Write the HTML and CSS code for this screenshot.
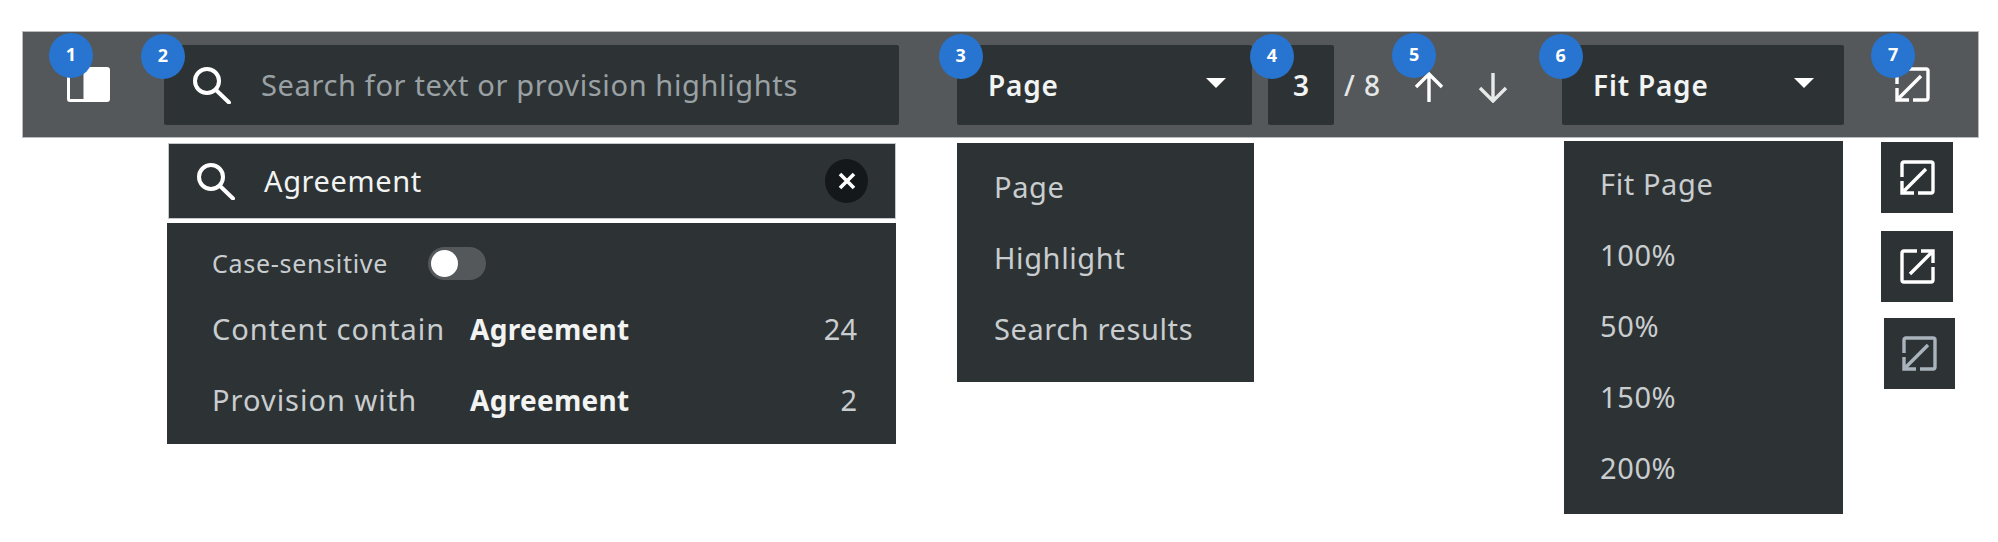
FILE: index.html
```html
<!DOCTYPE html>
<html lang="en">
<head>
  <meta charset="UTF-8">
  <meta name="viewport" content="width=device-width, initial-scale=1.0">
  <title>Document Viewer Toolbar</title>
  <link rel="stylesheet" href="styles.css">
</head>
<body>
  <!-- Toolbar -->
  <div class="toolbar">
    <div class="tool tool-panel">
      <span class="badge">1</span>
      <svg class="icon-panel" viewBox="0 0 43 35"><path d="M3 1.5H18V33.5H3Q1.5 33.5 1.5 32V3Q1.5 1.5 3 1.5Z" fill="none" stroke="#fff" stroke-width="3"/><path d="M18 0H40Q43 0 43 3V32Q43 35 40 35H18Z" fill="#fff"/></svg>
    </div>
    <div class="tool tool-search">
      <span class="badge">2</span>
      <svg class="icon-search" viewBox="0 0 39 38"><circle cx="15" cy="15" r="12" fill="none" stroke="#fff" stroke-width="4"/><path d="M24 24L37 36.5" fill="none" stroke="#fff" stroke-width="4" stroke-linecap="round"/></svg>
      <span class="placeholder">Search for text or provision highlights</span>
    </div>
    <div class="tool tool-select select-mode">
      <span class="badge badge-narrow">3</span>
      <span class="select-label">Page</span>
      <span class="caret"></span>
    </div>
    <div class="tool tool-page">
      <span class="badge badge-narrow">4</span>
      <span>3</span>
    </div>
    <span class="page-total">/ 8</span>
    <div class="tool tool-arrows">
      <span class="badge badge-narrow">5</span>
      <svg class="icon-arrow" viewBox="0 0 32 31"><path d="M16 30V2M3 15L16 2L29 15" fill="none" stroke="#fff" stroke-width="3.4"/></svg>
      <svg class="icon-arrow" viewBox="0 0 32 31"><path d="M16 1V29M3 16L16 29L29 16" fill="none" stroke="#e8eaea" stroke-width="3.4"/></svg>
    </div>
    <div class="tool tool-select select-zoom">
      <span class="badge">6</span>
      <span class="select-label">Fit Page</span>
      <span class="caret"></span>
    </div>
    <div class="tool tool-expand">
      <span class="badge">7</span>
      <svg class="icon-expand" viewBox="0 0 35 35"><path d="M2 17V4Q2 2 4 2H31Q33 2 33 4V31Q33 33 31 33H18M26 9L4 31M2 21V33H14" fill="none" stroke="#fff" stroke-width="3.4"/></svg>
    </div>
  </div>

  <!-- Expanded states -->
  <div class="states">
    <div class="search-states">
      <div class="search-active">
        <svg class="icon-search" viewBox="0 0 39 38"><circle cx="15" cy="15" r="12" fill="none" stroke="#fff" stroke-width="4"/><path d="M24 24L37 36.5" fill="none" stroke="#fff" stroke-width="4" stroke-linecap="round"/></svg>
        <span class="search-value">Agreement</span>
        <span class="clear">
          <svg viewBox="0 0 20 20"><path d="M3 3L17 17M17 3L3 17" fill="none" stroke="#fff" stroke-width="3.6"/></svg>
        </span>
      </div>
      <div class="search-results">
        <div class="case-row">
          <span>Case-sensitive</span>
          <span class="toggle"><span class="knob"></span></span>
        </div>
        <div class="result-row">
          <span class="result-label">Content contain</span>
          <strong>Agreement</strong>
          <span class="result-count">24</span>
        </div>
        <div class="result-row">
          <span class="result-label">Provision with</span>
          <strong>Agreement</strong>
          <span class="result-count">2</span>
        </div>
      </div>
    </div>

    <ul class="menu menu-mode">
      <li>Page</li>
      <li>Highlight</li>
      <li>Search results</li>
    </ul>

    <ul class="menu menu-zoom">
      <li>Fit Page</li>
      <li>100%</li>
      <li>50%</li>
      <li>150%</li>
      <li>200%</li>
    </ul>

    <div class="expand-states">
      <div class="expand-btn">
        <svg class="icon-expand" viewBox="0 0 35 35"><path d="M2 17V4Q2 2 4 2H31Q33 2 33 4V31Q33 33 31 33H18M26 9L4 31M2 21V33H14" fill="none" stroke="#fff" stroke-width="3.4"/></svg>
      </div>
      <div class="expand-btn">
        <svg class="icon-expand" viewBox="0 0 35 35"><path d="M17 2H4Q2 2 2 4V31Q2 33 4 33H31Q33 33 33 31V18M10 25L31 4M21 2H33V14" fill="none" stroke="#fff" stroke-width="3.4"/></svg>
      </div>
      <div class="expand-btn expand-disabled">
        <svg class="icon-expand" viewBox="0 0 35 35"><path d="M2 17V4Q2 2 4 2H31Q33 2 33 4V31Q33 33 31 33H18M26 9L4 31M2 21V33H14" fill="none" stroke="#a9b3bc" stroke-width="3.4"/></svg>
      </div>
    </div>
  </div>
</body>
</html>
```

FILE: styles.css
```css
/* General Styles */
* {
  margin: 0;
  padding: 0;
  box-sizing: border-box;
}

body {
  font-family: "Noto Sans", sans-serif;
  background-color: #fff;
  color: #c9cdcf;
  width: 1998px;
  height: 542px;
  overflow: hidden;
  padding: 31px 0 0 22px;
}

/* Toolbar */
.toolbar {
  display: flex;
  align-items: center;
  width: 1957px;
  height: 107px;
  background-color: #54585b;
  border: 1px solid #b9bcbe;
}

.tool {
  position: relative;
  display: flex;
  align-items: center;
}

.badge {
  position: absolute;
  top: -11px;
  left: -23px;
  width: 44px;
  height: 45px;
  border-radius: 50%;
  background-color: #2775d0;
  color: #fff;
  font-size: 18px;
  font-weight: 700;
  line-height: 43px;
  text-align: center;
  z-index: 1;
}

.badge-narrow {
  left: -18px;
}

.tool-panel {
  margin-left: 44px;
}

.tool-panel .badge {
  top: -34px;
  left: -18px;
}

.icon-panel {
  display: block;
  width: 43px;
  height: 35px;
}

.tool-search {
  width: 735px;
  height: 80px;
  margin-left: 54px;
  padding-left: 28px;
  background-color: #2d3335;
  border-radius: 2px;
}

.icon-search {
  display: block;
  flex: none;
  width: 39px;
  height: 38px;
}

.placeholder {
  margin-left: 30px;
  font-size: 29px;
  letter-spacing: 0.64px;
  color: #9aa1a4;
}

.tool-select {
  justify-content: space-between;
  height: 80px;
  background-color: #2d3335;
  border-radius: 2px;
  font-size: 28px;
  font-weight: 600;
  letter-spacing: 0.8px;
  color: #f2f3f3;
}

.select-mode {
  width: 295px;
  margin-left: 58px;
  padding: 0 26px 0 31px;
}

.select-zoom {
  width: 282px;
  margin-left: 53px;
  padding: 0 30px 0 31px;
}

.caret {
  width: 0;
  height: 0;
  border-left: 10px solid transparent;
  border-right: 10px solid transparent;
  border-top: 10px solid #fff;
  margin-top: -4px;
}

.tool-page {
  justify-content: center;
  width: 66px;
  height: 80px;
  margin-left: 16px;
  background-color: #2d3335;
  border-radius: 2px;
  font-size: 28px;
  font-weight: 600;
  color: #f2f3f3;
}

.page-total {
  margin-left: 10px;
  font-size: 28px;
  font-weight: 500;
  letter-spacing: 1px;
  color: #e6e8e8;
}

.tool-arrows {
  display: flex;
  gap: 32px;
  margin-left: 32px;
  margin-top: 5px;
}

.tool-arrows .badge {
  top: -39px;
  left: -21px;
}

.icon-arrow {
  display: block;
  width: 32px;
  height: 31px;
}

.tool-expand {
  margin-left: 51px;
}

.tool-expand .badge {
  top: -34px;
  left: -24px;
}

.icon-expand {
  display: block;
  width: 35px;
  height: 35px;
}

/* Expanded states */
.states {
  display: flex;
  align-items: flex-start;
}

.search-states {
  width: 729px;
  margin: 5px 0 0 145px;
}

.search-active {
  display: flex;
  align-items: center;
  height: 76px;
  margin-left: 1px;
  padding: 0 27px 0 27px;
  background-color: #2d3335;
  border: 1px solid #c4c8ca;
}

.search-value {
  flex: 1;
  margin-left: 29px;
  padding-bottom: 2px;
  font-size: 29px;
  letter-spacing: 0.6px;
  color: #f2f3f3;
}

.clear {
  display: flex;
  align-items: center;
  justify-content: center;
  width: 43px;
  height: 44px;
  border-radius: 50%;
  background-color: #14181a;
}

.clear svg {
  display: block;
  width: 20px;
  height: 20px;
}

.search-results {
  height: 221px;
  margin-top: 4px;
  padding: 0 39px 0 45px;
  background-color: #2d3335;
  font-size: 29px;
}

.case-row {
  display: flex;
  align-items: center;
  height: 70px;
  padding-top: 10px;
  font-size: 25px;
  letter-spacing: 0.7px;
}

.toggle {
  display: block;
  width: 58px;
  height: 33px;
  margin-left: 40px;
  padding: 3px;
  border-radius: 17px;
  background-color: #54585b;
}

.knob {
  display: block;
  width: 27px;
  height: 27px;
  border-radius: 50%;
  background-color: #fff;
}

.result-row {
  display: flex;
  align-items: center;
  height: 71px;
}

.result-label {
  width: 258px;
  letter-spacing: 1px;
}

.result-row strong {
  flex: 1;
  font-size: 28px;
  font-weight: 700;
  letter-spacing: 0.3px;
  color: #f2f3f3;
}

.menu {
  list-style: none;
  background-color: #2d3335;
  font-size: 29px;
  letter-spacing: 0.6px;
}

.menu li {
  height: 71px;
  line-height: 71px;
}

.menu-mode {
  width: 297px;
  height: 239px;
  margin: 5px 0 0 61px;
  padding: 8px 0 0 37px;
}

.menu-zoom {
  width: 279px;
  height: 373px;
  margin: 3px 0 0 310px;
  padding: 7px 0 0 36px;
}

.expand-states {
  display: flex;
  flex-direction: column;
  gap: 18px;
  margin: 4px 0 0 38px;
}

.expand-btn {
  display: flex;
  align-items: center;
  justify-content: center;
  width: 72px;
  height: 71px;
  background-color: #2d3335;
}

.expand-disabled {
  width: 71px;
  margin: -2px 0 0 3px;
}
```
